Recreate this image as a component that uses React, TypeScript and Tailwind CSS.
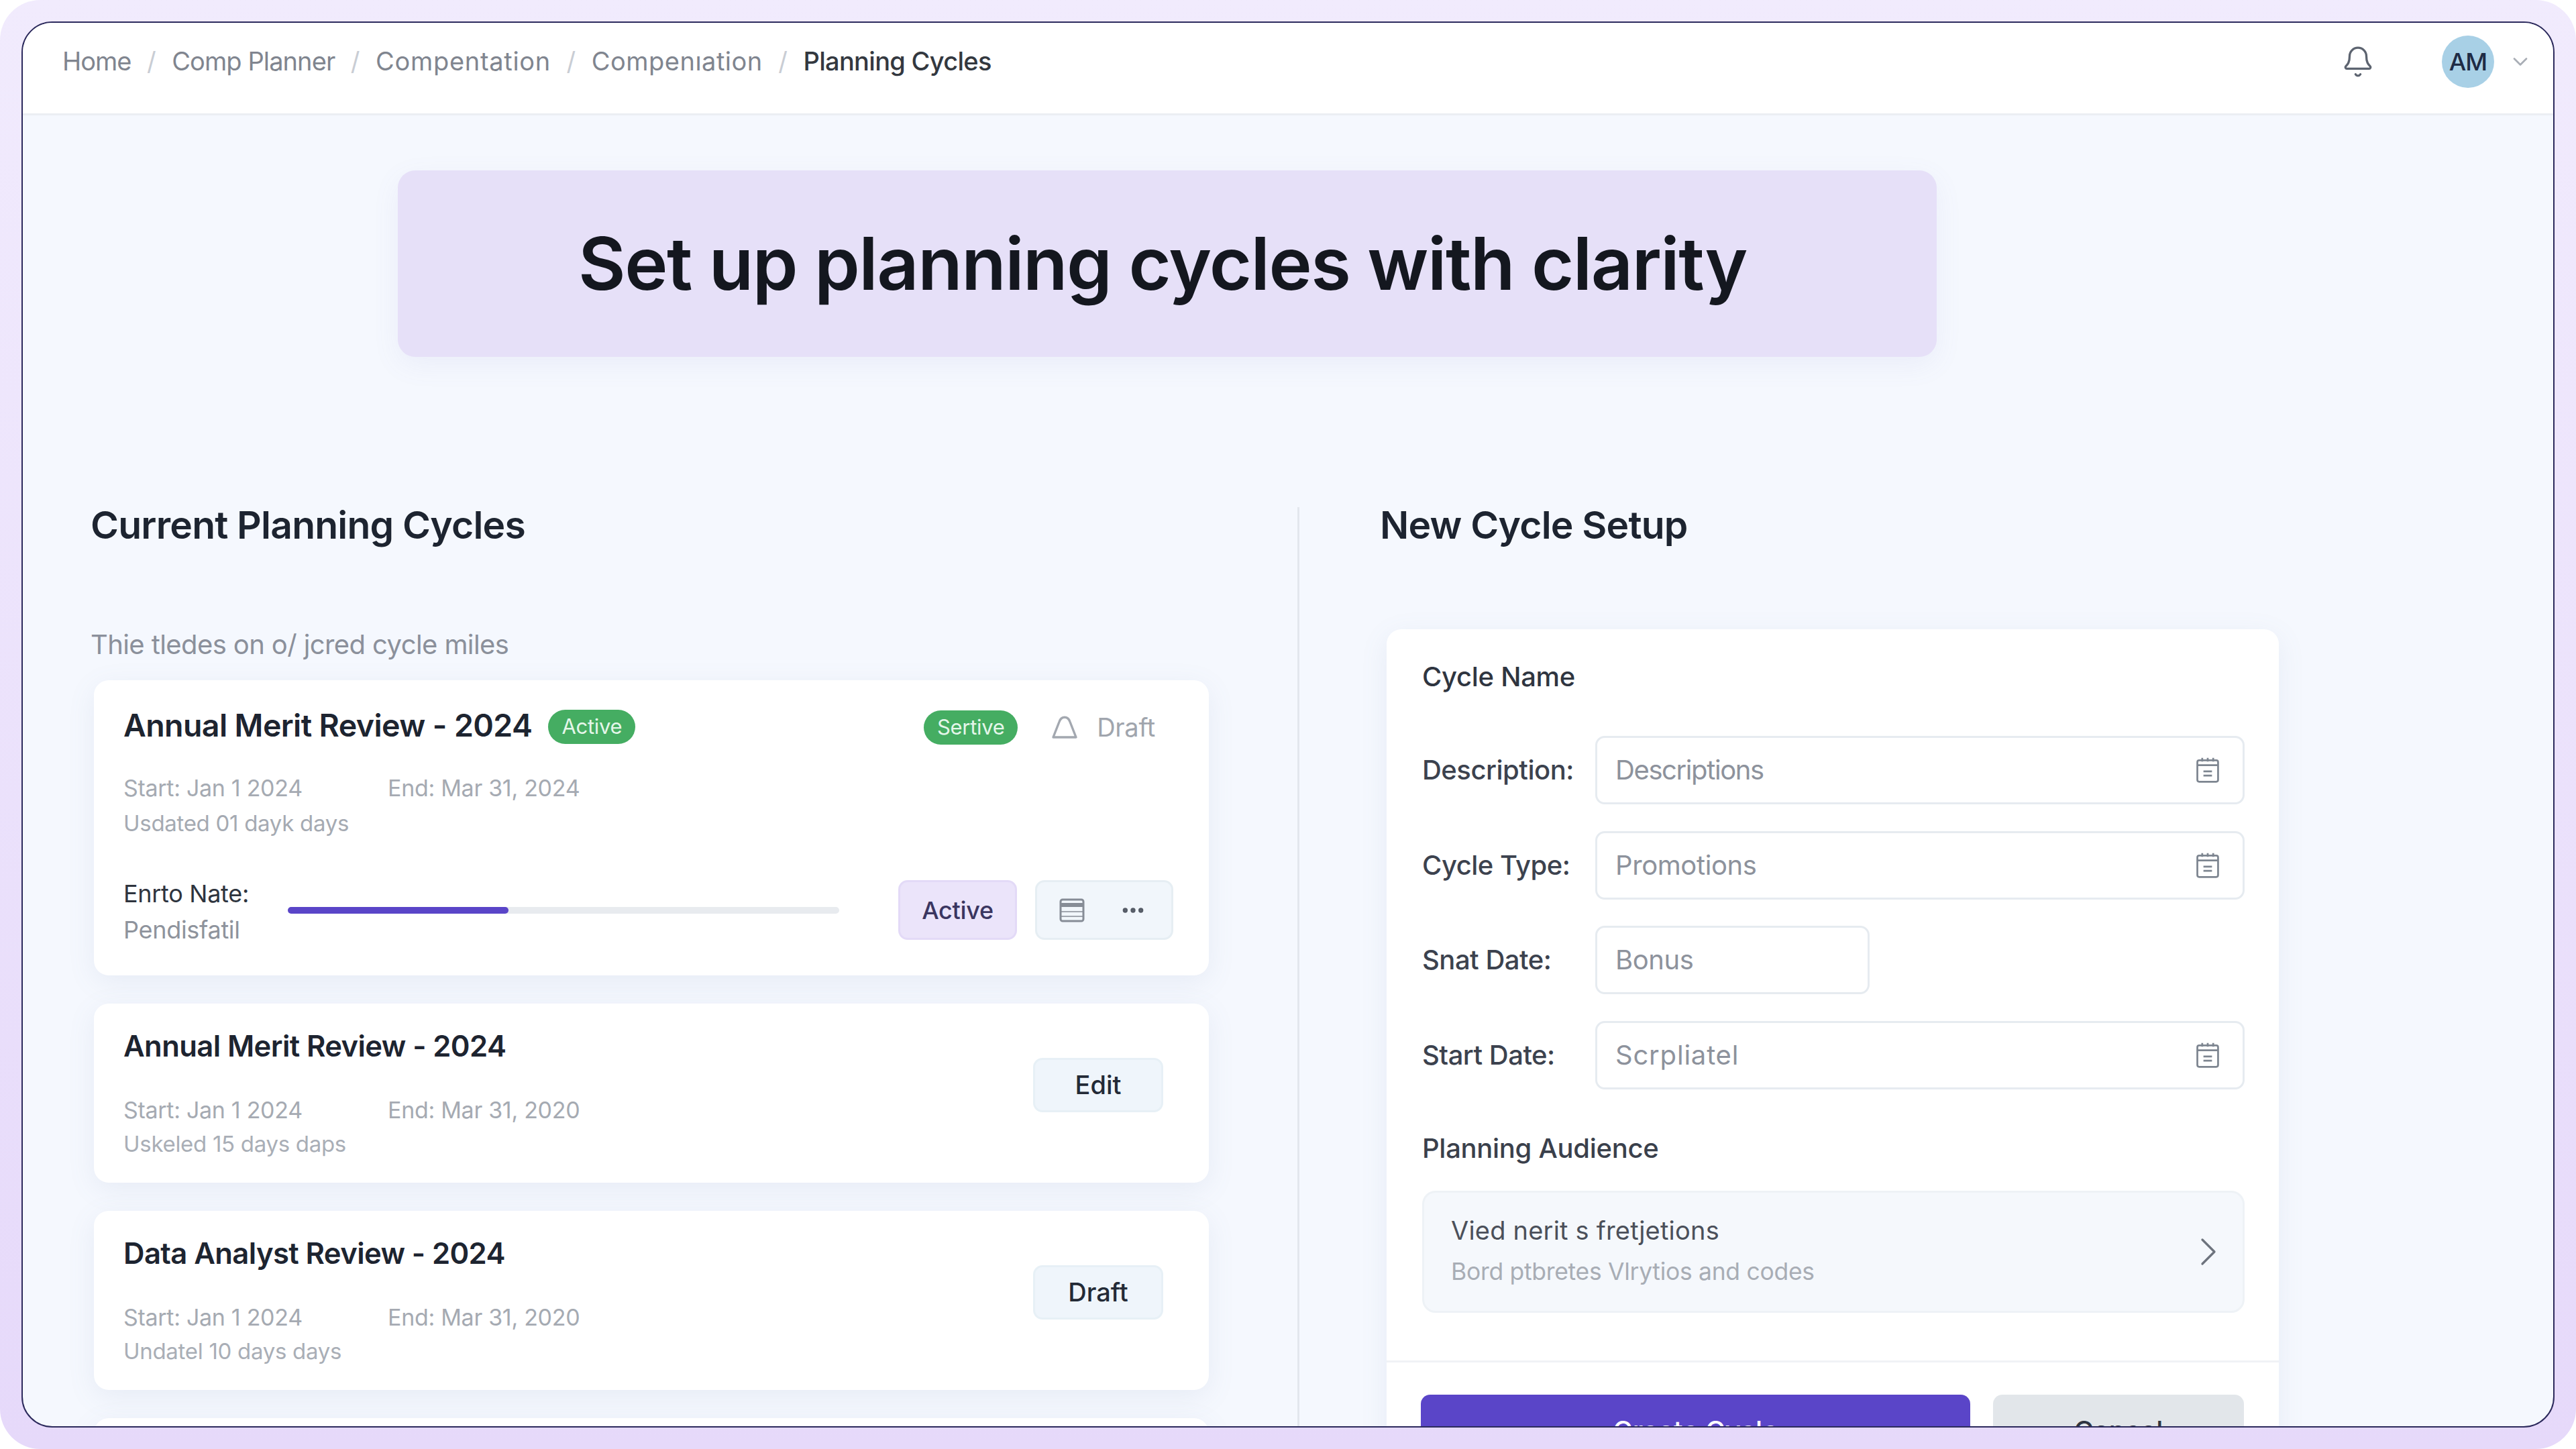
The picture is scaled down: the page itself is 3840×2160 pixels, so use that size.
import { Bell, ChevronDown, ChevronRight, Ellipsis } from 'lucide-react';

const crumbs = [
  { label: 'Home', cls: 'tracking-[-1px]' },
  { label: 'Comp Planner', cls: 'tracking-[-0.9px]' },
  { label: 'Compentation', cls: 'tracking-[0.7px]' },
  { label: 'Compenıation', cls: 'tracking-[0.5px]' },
];

const cycles = [
  { title: 'Annual Merit Review - 2024', start: 'Start: Jan 1 2024', end: 'End: Mar 31, 2020', updated: 'Uskeled 15 days daps', action: 'Edit' },
  { title: 'Data Analyst Review - 2024', start: 'Start: Jan 1 2024', end: 'End: Mar 31, 2020', updated: 'Undatel 10 days days', action: 'Draft' },
];

const FieldIcon = () => (
  <svg viewBox="0 0 40 44" className="h-[40px] w-[38px] text-[#7d8590]" fill="none" stroke="currentColor" strokeWidth="3">
    <rect x="3" y="6" width="34" height="35" rx="3" />
    <path d="M3 14h34M11 2v6M20 2v6M29 2v6M13 24h14M13 31h14" />
  </svg>
);

const Field = ({ label, value, valueCls, short, icon = true }: { label: string; value: string; valueCls: string; short?: boolean; icon?: boolean }) => (
  <div className="flex h-[102px] items-center">
    <span className="w-[258px] shrink-0 text-[40px] font-medium tracking-[-0.5px] text-[#3c424e]">{label}</span>
    <div className={`flex h-full items-center justify-between rounded-[14px] border-[3px] border-[#e6ebf0] bg-white pl-[27px] pr-[33px] ${short ? 'w-[409px]' : 'w-[971px]'}`}>
      <span className={`text-[40px] text-[#8d929c] ${valueCls}`}>{value}</span>
      {icon && <FieldIcon />}
    </div>
  </div>
);

export default function App() {
  return (
    <div className="h-[2160px] w-[3840px] overflow-hidden bg-white font-['Inter',sans-serif]">
      <div className="h-full w-full rounded-[60px] bg-gradient-to-b from-[#f1ebfd] to-[#e6d9fa] pb-[32px] pl-[32px] pr-[32px] pt-[32px]">
        <div className="flex h-full w-full flex-col overflow-hidden rounded-[46px] border-2 border-[#2c2a5c] bg-[#f5f8fe]">
          {/* Top bar */}
          <header className="flex h-[138px] shrink-0 items-center justify-between border-b-[3px] border-[#ebeef3] bg-white pb-[20px] pl-[59px] pr-[31px]">
            <nav className="flex items-center gap-[23.5px] text-[38px] text-[#80858f]">
              {crumbs.map((c) => (
                <div key={c.label} className="flex items-center gap-[23.5px]">
                  <span className={c.cls}>{c.label}</span>
                  <span className="text-[#c9cdd4]">/</span>
                </div>
              ))}
              <span className="font-medium tracking-[-0.7px] text-[#33383f]">Planning Cycles</span>
            </nav>
            <div className="flex items-center">
              <Bell className="h-[50px] w-[50px] text-[#5d6470]" strokeWidth={1.6} />
              <div className="ml-[100px] flex h-[78px] w-[78px] items-center justify-center rounded-full bg-[#a8d0e6] text-[36px] font-medium tracking-[-1px] text-[#1e2b45]">AM</div>
              <ChevronDown className="ml-[21px] h-[36px] w-[36px] text-[#a9aeb6]" strokeWidth={1.8} />
            </div>
          </header>

          {/* Hero */}
          <div className="ml-[559px] mt-[82px] flex h-[278px] w-[2294px] shrink-0 items-center rounded-[26px] bg-[#e6e0f8] pl-[269px] shadow-[0_12px_40px_rgba(120,110,190,0.08)]">
            <h1 className="text-[108.7px] font-semibold leading-none tracking-[-1.5px] text-[#14171f]">Set up planning cycles with clarity</h1>
          </div>

          <div className="mt-[224px] flex min-h-0 flex-1">
            {/* Current cycles */}
            <section className="w-[1903px] shrink-0 border-r-[3px] border-[#e3e7ee] pl-[101px]">
              <h2 className="text-[57px] font-semibold leading-[53px] tracking-[-0.8px] text-[#1d2430]">Current Planning Cycles</h2>
              <p className="mt-[128px] text-[40px] leading-[48px] tracking-[-0.6px] text-[#8b909b]">Thie tledes on o/ jcred cycle miles</p>

              <div className="ml-[5px] mt-[29px] flex w-[1662px] flex-col gap-[42px]">
                <div className="rounded-[22px] bg-white pb-[53px] pl-[44px] pr-[53px] pt-[38px] shadow-[0_10px_40px_rgba(110,125,170,0.1)]">
                  <div className="flex h-[60px] items-center">
                    <h3 className="text-[46.5px] font-semibold tracking-[-0.6px] text-[#1d2430]">Annual Merit Review - 2024</h3>
                    <span className="ml-[24px] mt-[3px] flex h-[51px] w-[130px] items-center justify-center rounded-full bg-[#45ad62] text-[31px] tracking-[-0.3px] text-[#e4f6e9]">Active</span>
                    <span className="ml-auto mt-[4px] flex h-[51px] w-[140px] items-center justify-center rounded-full bg-[#45ad62] text-[31px] tracking-[-0.3px] text-[#e4f6e9]">Sertive</span>
                    <svg viewBox="0 0 40 40" className="ml-[50px] mt-[4px] h-[40px] w-[40px] text-[#a3a8b0]" fill="none" stroke="currentColor" strokeWidth="3.4">
                      <path d="M3 35 12 12C15 3 25 3 28 12L37 35Z" strokeLinejoin="round" />
                    </svg>
                    <span className="ml-[28px] mr-[27px] mt-[4px] text-[38px] tracking-[-0.3px] text-[#a0a5ad]">Draft</span>
                  </div>
                  <div className="mt-[41px] flex text-[34px] leading-[44px] tracking-[-0.3px] text-[#a5aab2]">
                    <span className="w-[394px]">Start: Jan 1 2024</span>
                    <span>End: Mar 31, 2024</span>
                  </div>
                  <p className="mt-[8px] text-[33px] leading-[44px] tracking-[-0.3px] text-[#a5aab2]">Usdated 01 dayk days</p>
                  <div className="mt-[63px] flex h-[89px] items-center">
                    <div className="mt-[4px] w-[245px] shrink-0 text-[36px] leading-[54px] tracking-[-0.3px]">
                      <p className="text-[#2e343e]">Enrto Nate:</p>
                      <p className="text-[#8e939c]">Pendisfatil</p>
                    </div>
                    <div className="h-[10px] w-[822px] rounded-full bg-[#e8ebef]">
                      <div className="h-full w-[40%] rounded-full bg-[#5a45c8]" />
                    </div>
                    <button className="ml-[88px] h-full w-[177px] rounded-[14px] border-[3px] border-[#e3daf7] bg-[#ebe4fa] text-[36px] font-medium tracking-[-0.3px] text-[#3a3560]">Active</button>
                    <div className="ml-[27px] flex h-full w-[206px] items-center justify-center gap-[52px] rounded-[14px] border-[3px] border-[#e6eef3] bg-[#f1f6fb] pr-[4px]">
                      <svg viewBox="0 0 38 36" className="h-[36px] w-[38px] text-[#868c96]" fill="none" stroke="currentColor" strokeWidth="3">
                        <rect x="2" y="2" width="34" height="32" rx="3" />
                        <path d="M2 10h34" strokeWidth="6" />
                        <path d="M2 20h34M2 27h34" strokeWidth="1.5" />
                      </svg>
                      <Ellipsis className="h-[40px] w-[40px] text-[#555b66]" strokeWidth={2.4} />
                    </div>
                  </div>
                </div>

                {cycles.map((c) => (
                  <div key={c.title} className="flex h-[267px] items-start justify-between rounded-[22px] bg-white pl-[44px] pr-[68px] pt-[36px] shadow-[0_10px_40px_rgba(110,125,170,0.1)]">
                    <div>
                      <h3 className="text-[43.6px] font-semibold leading-[56px] tracking-[-0.6px] text-[#1d2430]">{c.title}</h3>
                      <div className="mt-[45px] flex text-[34px] leading-[44px] tracking-[-0.3px] text-[#a5aab2]">
                        <span className="w-[394px]">{c.start}</span>
                        <span>{c.end}</span>
                      </div>
                      <p className="mt-[6px] text-[33px] leading-[44px] tracking-[-0.3px] text-[#a9aeb6]">{c.updated}</p>
                    </div>
                    <button className="mt-[45px] h-[81px] w-[194px] rounded-[14px] border-[3px] border-[#e7f0f6] bg-[#eff5fb] text-[38px] font-medium text-[#232a36]">{c.action}</button>
                  </div>
                ))}
                <div className="h-[267px] rounded-[22px] bg-white shadow-[0_10px_40px_rgba(110,125,170,0.1)]" />
              </div>
            </section>

            {/* New cycle form */}
            <section className="pl-[120px]">
              <h2 className="text-[57px] font-semibold leading-[53px] tracking-[-0.8px] text-[#1d2430]">New Cycle Setup</h2>
              <div className="ml-[10px] mt-[129px] w-[1330px] rounded-[22px] bg-white pt-[47px] shadow-[0_10px_40px_rgba(110,125,170,0.1)]">
                <div className="pb-[71px] pl-[53px] pr-[51px]">
                  <p className="text-[40px] font-medium leading-[48px] tracking-[-0.3px] text-[#2f3540]">Cycle Name</p>
                  <div className="mt-[64px] flex flex-col gap-[39.5px]">
                    <Field label="Description:" value="Descriptions" valueCls="tracking-[-1.4px]" />
                    <Field label="Cycle Type:" value="Promotions" valueCls="tracking-[-0.4px]" />
                    <Field label="Snat Date:" value="Bonus" valueCls="tracking-[-0.4px]" short icon={false} />
                    <Field label="Start Date:" value="Scrpliatel" valueCls="tracking-[0.8px]" />
                  </div>
                  <p className="mt-[64px] text-[40px] font-medium leading-[48px] tracking-[-0.3px] text-[#3a404b]">Planning Audience</p>
                  <div className="mt-[39px] flex h-[182px] items-center justify-between rounded-[20px] border-[3px] border-[#eef2f6] bg-[#f5f8fc] pl-[40px] pr-[15px]">
                    <div className="pb-[2px]">
                      <p className="text-[38px] leading-[50px] tracking-[0.2px] text-[#4b505a]">Vied nerit s fretjetions</p>
                      <p className="mt-[12px] text-[35.5px] leading-[50px] tracking-[-0.3px] text-[#a8adb5]">Bord ptbretes Vlrytios and codes</p>
                    </div>
                    <ChevronRight className="h-[72px] w-[72px] text-[#6d737d]" strokeWidth={1.1} />
                  </div>
                </div>
                <div className="flex gap-[34px] border-t-[3px] border-[#f0f2f6] px-[51px] pt-[48px]">
                  <button className="h-[108px] w-[819px] rounded-[14px] bg-[#5a45c8] text-[40px] font-medium text-white">Create Cycle</button>
                  <button className="h-[108px] w-[374px] rounded-[14px] bg-[#e2e6ea] text-[40px] font-medium text-[#2f3540]">Cancel</button>
                </div>
              </div>
            </section>
          </div>
        </div>
      </div>
    </div>
  );
}
